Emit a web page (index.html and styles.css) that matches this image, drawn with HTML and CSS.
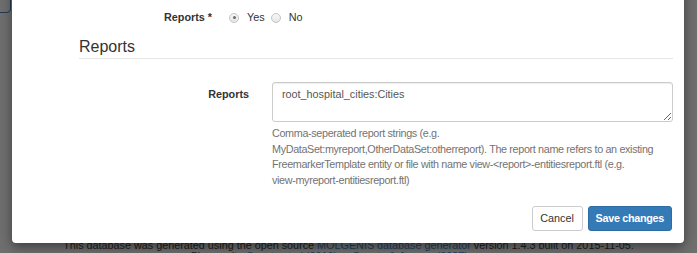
FILE: index.html
```html
<!DOCTYPE html>
<html>
<head>
<meta charset="utf-8">
<link rel="stylesheet" href="styles.css">
</head>
<body>
<div class="page">
  <div class="page-edge"></div>
  <div class="page-footer">
    <p>This database was generated using the open source <a>MOLGENIS database generator</a> version 1.4.3 built on 2015-11-05.</p>
    <p>Please cite <a>Swertz et al (2010)</a> or <a>Swertz &amp; Jansen (2007)</a> on use.</p>
  </div>
</div>
<div class="modal">
  <div class="modal-body">
    <div class="row-top">
      <div class="label-top">Reports *</div>
      <div class="radios">
        <span class="radio checked"></span><span class="radio-text">Yes</span>
        <span class="radio"></span><span class="radio-text">No</span>
      </div>
    </div>
    <div class="legend">Reports</div>
    <div class="form-row">
      <div class="label">Reports</div>
      <div class="control">
        <textarea class="textarea" readonly>root_hospital_cities:Cities</textarea>
        <p class="help">Comma-seperated report strings (e.g.<br>MyDataSet:myreport,OtherDataSet:otherreport). The report name refers to an existing FreemarkerTemplate entity or file with name view-&lt;report&gt;-entitiesreport.ftl (e.g. <span class="nowrap">view-myreport-entitiesreport.ftl)</span></p>
      </div>
    </div>
  </div>
  <div class="modal-footer">
    <button class="btn btn-default">Cancel</button>
    <button class="btn btn-primary">Save changes</button>
  </div>
</div>
</body>
</html>
```

FILE: styles.css
```css
html, body {
  margin: 0;
  padding: 0;
}
body {
  width: 697px;
  height: 253px;
  overflow: hidden;
  background: #6f6f6f;
  font-family: "Liberation Sans", Arial, Helvetica, sans-serif;
  font-size: 10.8px;
  line-height: 15.4px;
  color: #333;
  position: relative;
}
.page {
  height: 253px;
  display: flex;
  flex-direction: column;
  justify-content: flex-end;
}
.page-edge {
  position: absolute;
  left: -12px;
  top: -12px;
  width: 21px;
  height: 23px;
  border: 1px solid #243a52;
  border-radius: 4px;
}
.page-footer {
  text-align: center;
  color: #1b1b1b;
  margin-bottom: -8.5px;
  line-height: 11px;
}
.page-footer p {
  margin: 0;
}
.page-footer a {
  color: #1c3d5c;
}
.modal {
  position: absolute;
  left: 12px;
  top: -19px;
  width: 672px;
  background: #fff;
  border-radius: 4px;
  box-shadow: 0 4px 12px rgba(0, 0, 0, 0.45);
}
.modal-body {
  padding: 29px 11px 0 67px;
}
.row-top {
  display: flex;
  align-items: center;
  height: 15.4px;
}
.label-top {
  width: 133px;
  text-align: right;
  font-weight: bold;
}
.radios {
  display: flex;
  align-items: center;
  margin-left: 17px;
}
.radio {
  width: 10px;
  height: 10px;
  border-radius: 50%;
  border: 1px solid #c4c4c4;
  background: linear-gradient(#f7f7f7, #e6e6e6);
  box-sizing: border-box;
  position: relative;
}
.radio.checked::after {
  content: "";
  position: absolute;
  left: 2.5px;
  top: 2.5px;
  width: 3px;
  height: 3px;
  border-radius: 50%;
  background: #6a6a6a;
}
.radio-text {
  margin: 0 6px 0 8px;
}
.legend {
  margin-top: 11px;
  font-size: 16px;
  line-height: 22px;
  border-bottom: 1px solid #e5e5e5;
  color: #333;
}
.form-row {
  display: flex;
  margin-top: 23px;
}
.label {
  width: 170px;
  text-align: right;
  font-weight: bold;
  padding-top: 4.5px;
}
.control {
  margin-left: 23px;
  flex: 1;
}
.textarea {
  display: block;
  width: 100%;
  height: 40px;
  box-sizing: border-box;
  border: 1px solid #ccc;
  border-radius: 3px;
  padding: 4px 9px;
  font-family: inherit;
  font-size: 10.8px;
  line-height: 15.4px;
  color: #555;
  box-shadow: inset 0 1px 1px rgba(0, 0, 0, 0.075);
  margin: 0;
  outline: none;
  resize: vertical;
}
.help {
  margin: 4px 0 0;
  color: #737373;
  letter-spacing: -0.35px;
}
.nowrap {
  white-space: nowrap;
}
.modal-footer {
  display: flex;
  justify-content: flex-end;
  gap: 5px;
  padding: 17.5px 12px 12px;
}
.btn {
  height: 25px;
  box-sizing: border-box;
  font-family: inherit;
  font-size: 10.8px;
  padding: 0 9px;
  border-radius: 3px;
  border: 1px solid #ccc;
  background: #fff;
  color: #333;
}
.btn-default {
  width: 51px;
  padding: 0;
}
.btn-primary {
  background: #337ab7;
  border-color: #2e6da4;
  color: #fff;
  font-weight: bold;
  letter-spacing: -0.3px;
  padding: 0 7px;
}
```
